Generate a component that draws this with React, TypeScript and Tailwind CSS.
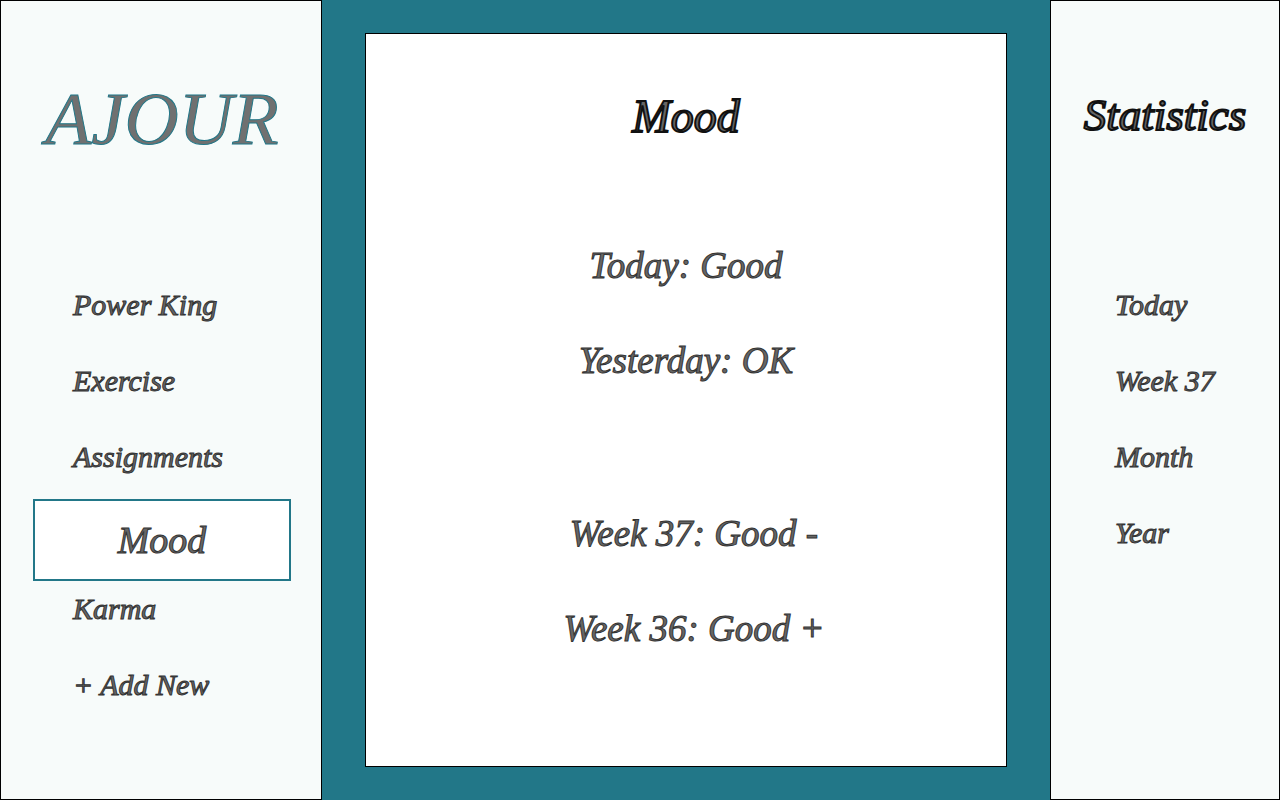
const habits = ['Power King', 'Exercise', 'Assignments', 'Mood', 'Karma', '+ Add New'];
const periods = ['Today', 'Week 37', 'Month', 'Year'];
const recentDays = ['Today: Good', 'Yesterday: OK'];
const recentWeeks = ['Week 37: Good -', 'Week 36: Good +'];

function HabitMenu({ selected }: { selected: string }) {
  return (
    <aside className="border border-black bg-[#f7fbfa] pr-[30px] pl-8">
      <h1 className="flex h-[270px] items-start justify-center pt-20 text-[75px] leading-none text-[#707070] [-webkit-text-stroke:1px_#227788]">
        AJOUR
      </h1>
      <nav aria-label="Habits">
        <ul>
          {habits.map((habit) => (
            <li key={habit} className="h-[76px]">
              {habit === selected ? (
                <button
                  type="button"
                  aria-current="page"
                  className="h-[82px] w-full border-2 border-[#227788] bg-white text-[38px] leading-none italic"
                >
                  {habit}
                </button>
              ) : (
                <button type="button" className="h-full w-full pb-2 pl-10 text-left text-[30px] leading-none italic">
                  {habit}
                </button>
              )}
            </li>
          ))}
        </ul>
      </nav>
    </aside>
  );
}

function MoodCard() {
  return (
    <main className="bg-[#227788] px-[43px] py-[33px]">
      <section className="h-full border border-black bg-white text-center">
        <h2 className="h-[184px] pt-[60px] text-[46px] leading-none [-webkit-text-stroke:2px_#111]">Mood</h2>
        <ul className="text-[37px] leading-none">
          {recentDays.map((entry) => (
            <li key={entry} className="flex h-[95px] items-center justify-center">
              {entry}
            </li>
          ))}
        </ul>
        <ul className="mt-[78px] pl-4 text-[37px] leading-none">
          {recentWeeks.map((entry) => (
            <li key={entry} className="flex h-[95px] items-center justify-center">
              {entry}
            </li>
          ))}
        </ul>
      </section>
    </main>
  );
}

function StatisticsMenu() {
  return (
    <aside className="border border-black bg-[#f7fbfa]">
      <h2 className="h-[270px] pt-[92px] text-center text-[45px] leading-none [-webkit-text-stroke:2px_#111]">
        Statistics
      </h2>
      <nav aria-label="Statistics">
        <ul>
          {periods.map((period) => (
            <li key={period} className="h-[76px]">
              <button type="button" className="h-full w-full pb-2 pl-16 text-left text-[30px] leading-none italic">
                {period}
              </button>
            </li>
          ))}
        </ul>
      </nav>
    </aside>
  );
}

export default function App() {
  return (
    <div className="grid min-h-screen grid-cols-[322px_1fr_230px] font-['Gabriola','Liberation_Serif',serif] text-[#666] italic [-webkit-text-stroke:1px_#333]">
      <HabitMenu selected="Mood" />
      <MoodCard />
      <StatisticsMenu />
    </div>
  );
}
